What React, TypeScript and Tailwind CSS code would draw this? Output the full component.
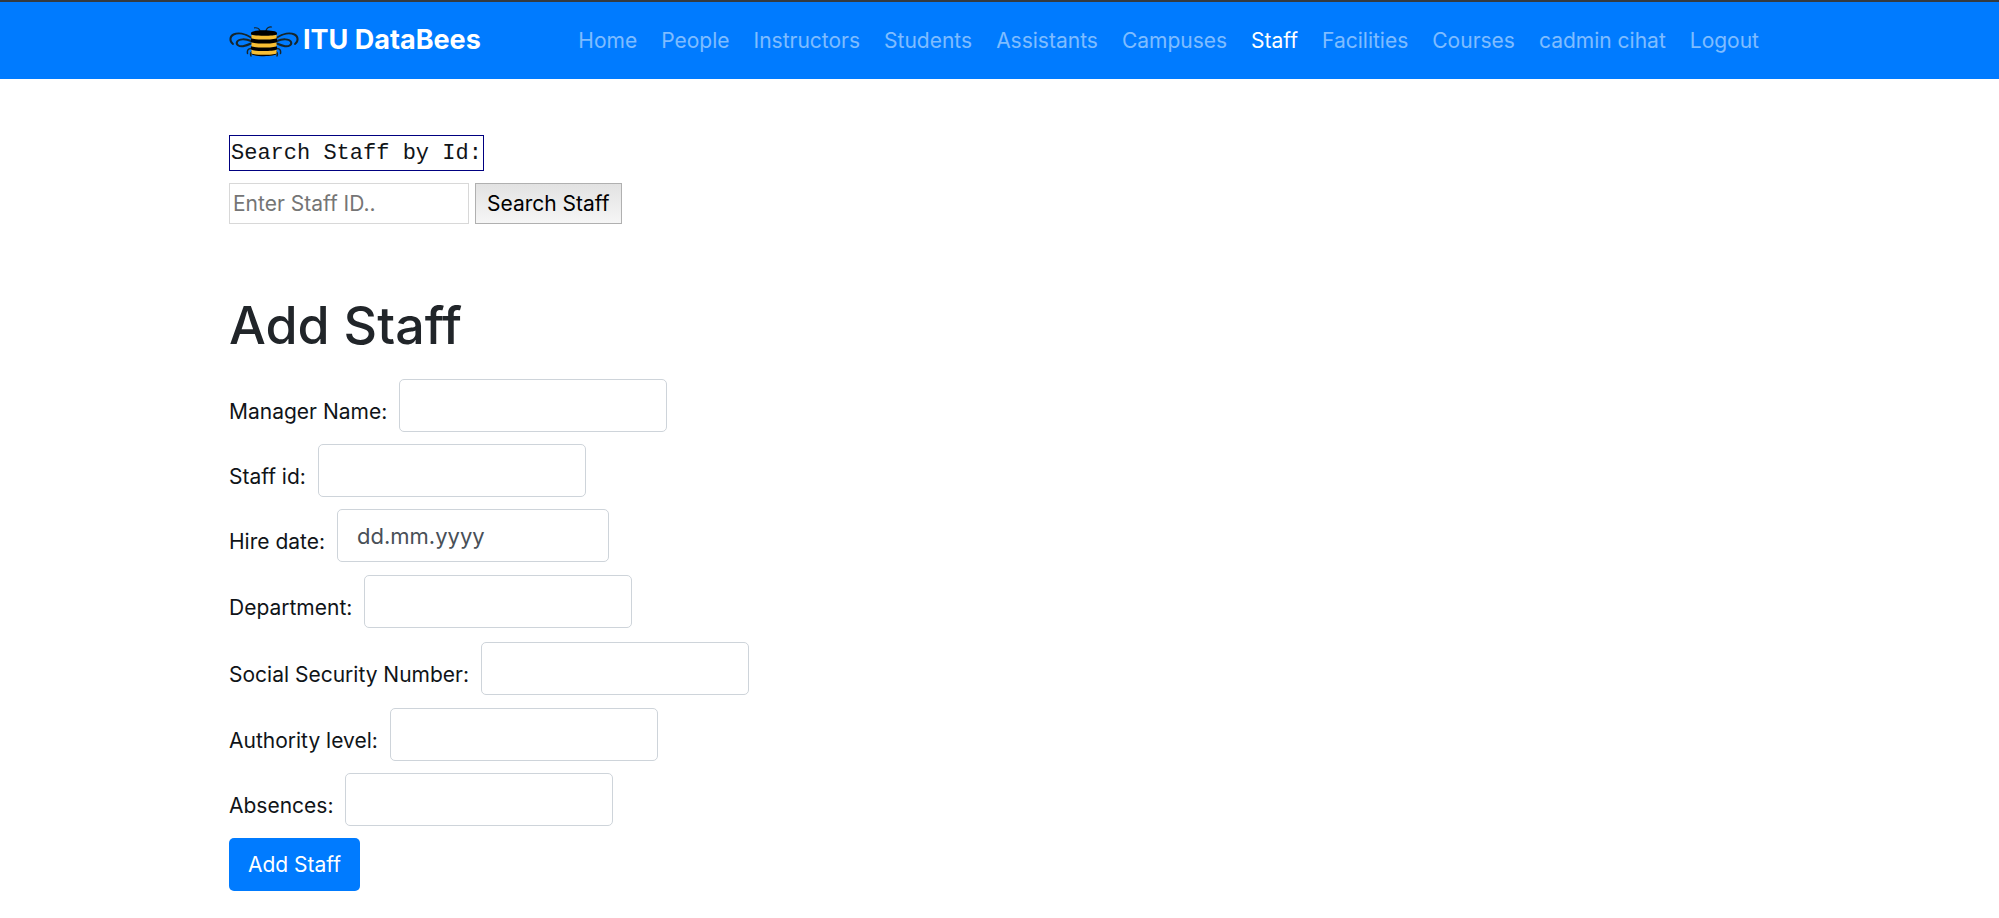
import React from "react";

const navItems = [
  "Home",
  "People",
  "Instructors",
  "Students",
  "Assistants",
  "Campuses",
  "Staff",
  "Facilities",
  "Courses",
  "cadmin cihat",
  "Logout",
];

function BeeLogo() {
  return (
    <svg viewBox="0 -2 70 34" className="h-[34px] w-[70px] shrink-0" fill="none" aria-hidden="true">
      <g stroke="#16262b" strokeWidth="2" strokeLinecap="round">
        <path d="M31 4.500C30 2.500 28 1.500 25.500 1.800" strokeWidth="1.200" />
        <path d="M37 4.500C38 2 40 .8 42.500 1" strokeWidth="1.200" />
        <path d="M22 11.500C16 7.500 9 6.500 4.500 8.500C.5 10.500 .5 15.500 4 18" />
        <path d="M22 15C16 12.500 10 13 8.200 15.500C6.500 18.500 10 20.800 14 20.200C18 19.500 20 18.500 22 17.500" />
        <path d="M48 11.500C54 7.500 61 6.500 65.500 8.500C69.500 10.500 69.500 15.500 66 18" />
        <path d="M48 15C54 12.500 60 13 61.800 15.500C63.500 18.500 60 20.800 56 20.200C52 19.500 50 18.500 48 17.500" />
        <path d="M22 22.500C19 22.500 18 24.500 18.500 27.500M23 25.500C21.500 26.500 21.200 28 22 30M48 22.500C51 22.500 52 24.500 51.500 27.500M47 25.500C48.500 26.500 48.800 28 48 30" strokeWidth="1.500" />
      </g>
      <path d="M22.500 7.500V27C22.500 31 47.500 31 47.500 27V7.500Z" fill="#f7be33" />
      <g fill="#000">
        <path d="M22 7C22 3.200 48 3.200 48 7V8.500C46 10.200 24 10.200 22 8.500Z" />
        <path d="M22 12.200C26 14 44 14 48 12.200V16.200C44 18 26 18 22 16.200Z" />
        <path d="M22 20.200C26 22 44 22 48 20.200V23.600C44 25.600 26 25.600 22 23.600Z" />
        <path d="M22 27.500C26 29.300 44 29.300 48 27.500C47 31 23 31 22 27.500Z" />
      </g>
    </svg>
  );
}

type FieldProps = { id: string; label: string; placeholder?: string };

function Field({ id, label, placeholder }: FieldProps) {
  return (
    <div className="flex items-end gap-3">
      <label htmlFor={id} className="pb-1 leading-8 whitespace-nowrap">
        {label}
      </label>
      <input
        id={id}
        name={id}
        type="text"
        placeholder={placeholder}
        className={
          placeholder
            ? "h-[53px] w-[272px] rounded-[5px] border border-[#ced4da] bg-white px-[19px] text-[22px] placeholder:text-[#495057]"
            : "h-[53px] w-[268px] rounded-[5px] border border-[#ced4da] bg-white px-[19px] text-[22px]"
        }
      />
    </div>
  );
}

export default function App() {
  return (
    <div className="min-h-screen bg-white font-['Inter','Liberation_Sans',sans-serif] text-[21px] text-[#101418]">
      <header className="border-t-2 border-[#343a40] bg-[#007bff]">
        <div className="mx-auto flex h-[77px] max-w-[1583px] items-center px-[21px]">
          <a href="#home" className="flex items-center gap-1 text-[27px] font-bold whitespace-nowrap text-white">
            <BeeLogo />
            ITU DataBees
          </a>
          <nav className="ml-auto flex gap-6 pr-[11px]">
            {navItems.map((item) => (
              <a
                key={item}
                href="#"
                aria-current={item === "Staff" ? "page" : undefined}
                className={item === "Staff" ? "whitespace-nowrap text-white" : "whitespace-nowrap text-white/50"}
              >
                {item}
              </a>
            ))}
          </nav>
        </div>
      </header>

      <main className="mx-auto max-w-[1583px] px-[21px] pt-14">
        <form className="flex flex-col items-start gap-3">
          <label
            htmlFor="search-id"
            className="border border-[#000080] px-px pt-0.5 font-['Liberation_Mono',monospace] text-[22px] leading-8"
          >
            Search Staff by Id:
          </label>
          <div className="flex gap-1.5">
            <input
              id="search-id"
              type="text"
              placeholder="Enter Staff ID.."
              className="h-[41px] w-60 border border-[#d8d8d8] px-[3px] placeholder:text-[#757575]"
            />
            <button
              type="button"
              className="h-[41px] border border-[#b0b0b0] bg-linear-to-b from-[#e2e2e2] to-[#f6f6f6] px-[11px] whitespace-nowrap text-black"
            >
              Search Staff
            </button>
          </div>
        </form>

        <h1 className="mt-[69px] text-[52px] leading-[66px] font-medium text-[#212529]">Add Staff</h1>

        <form className="mt-5 flex flex-col items-start gap-3">
          <Field id="manager-name" label="Manager Name:" />
          <Field id="staff-id" label="Staff id:" />
          <Field id="hire-date" label="Hire date:" placeholder="dd.mm.yyyy" />
          <div className="flex flex-col gap-3.5 py-px">
            <Field id="department" label="Department:" />
            <Field id="ssn" label="Social Security Number:" />
          </div>
          <Field id="authority-level" label="Authority level:" />
          <Field id="absences" label="Absences:" />
          <button type="button" className="h-[53px] rounded-[5px] bg-[#007bff] px-[19px] text-white">
            Add Staff
          </button>
        </form>
      </main>
    </div>
  );
}
